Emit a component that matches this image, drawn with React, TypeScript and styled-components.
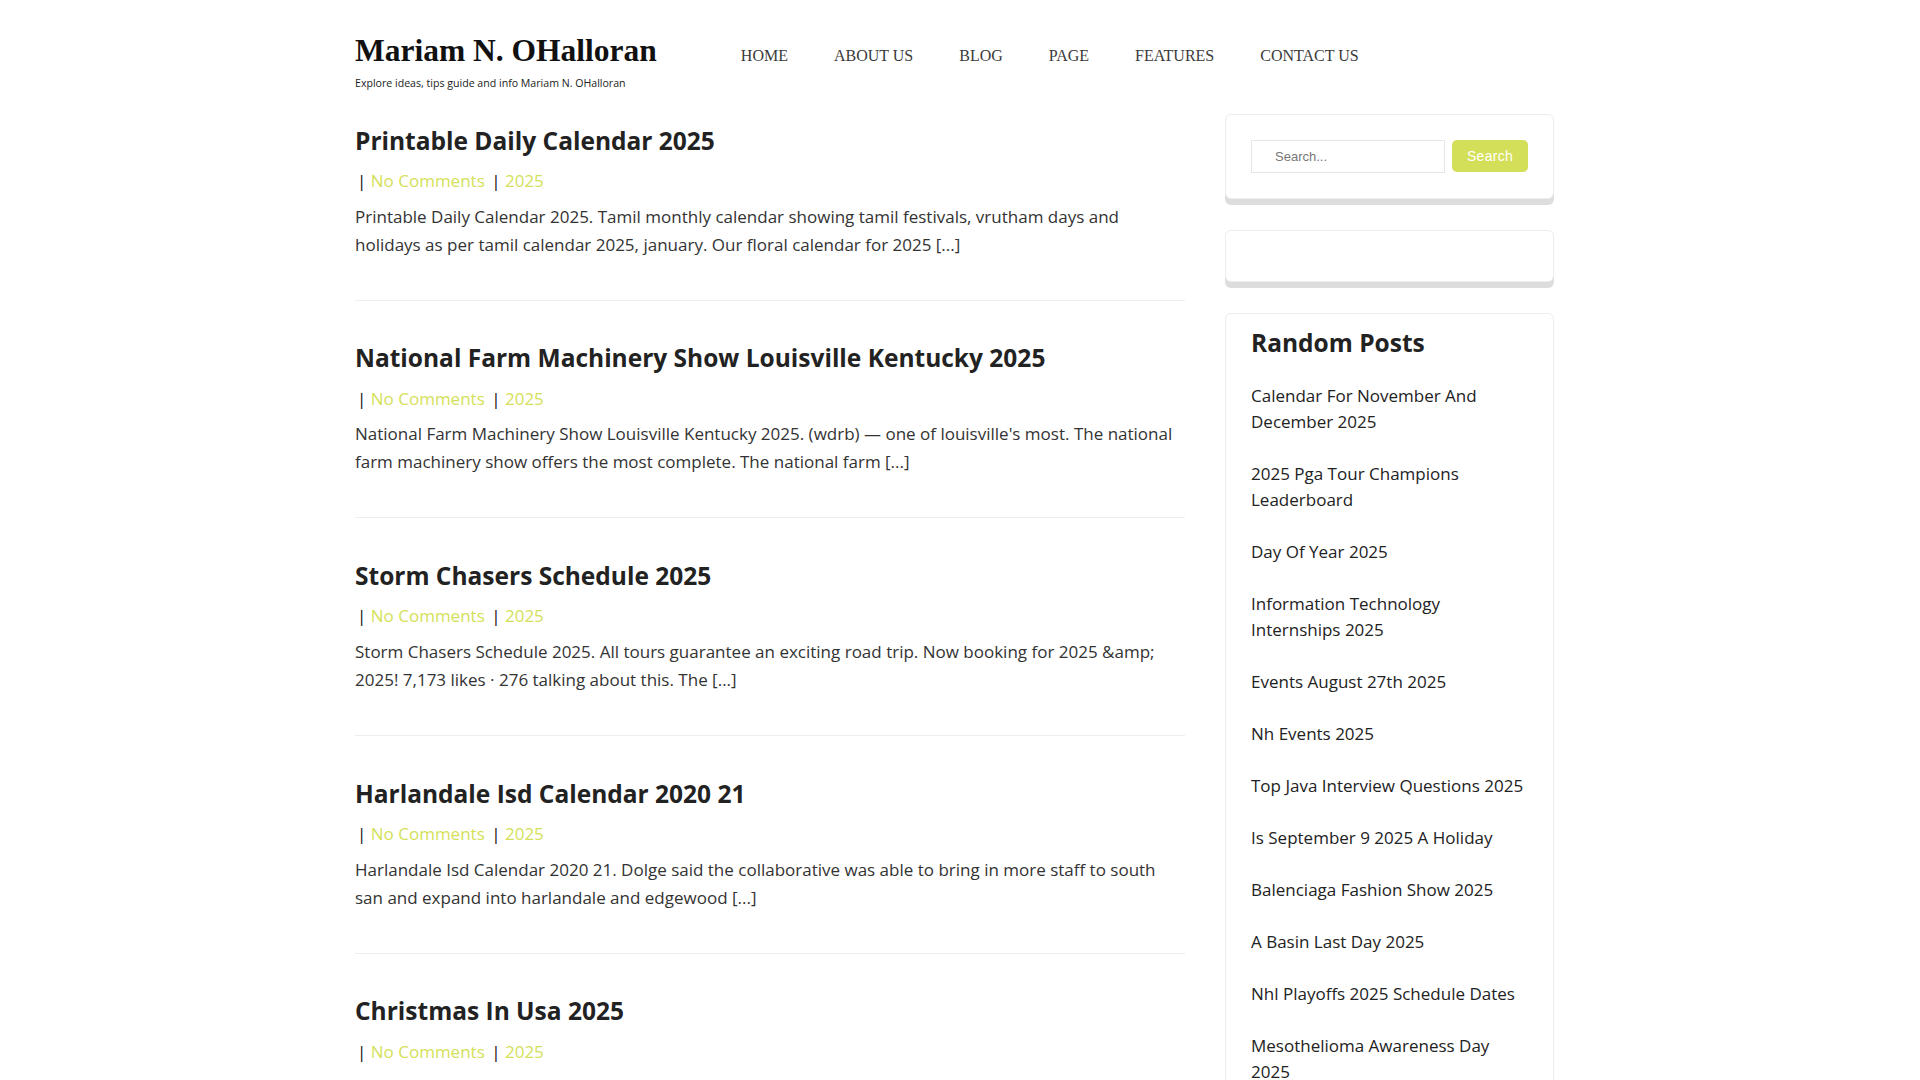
import React from 'react';
import styled, { createGlobalStyle } from 'styled-components';

const GlobalStyle = createGlobalStyle`
  * { box-sizing: border-box; }
  html, body { margin: 0; padding: 0; background: #ffffff; }
  body {
    font-family: 'Open Sans', 'Noto Sans', Arial, sans-serif;
    color: #333333;
    -webkit-font-smoothing: antialiased;
  }
  a { text-decoration: none; }
`;

const ACCENT = '#d4df59';

/* 1214px wide, 13px kept free on the right where the reference has its scrollbar */
const Page = styled.div`
  width: 1214px;
  padding: 0 13px 0 2px;
  margin: 0 auto;
`;

const Header = styled.header`
  display: flex;
  align-items: flex-start;
  padding-top: 32px;
`;

const Brand = styled.div`
  display: flex;
  flex-direction: column;
  flex: 0 0 auto;
`;

const SiteTitle = styled.a`
  font-family: 'Liberation Serif', 'Times New Roman', serif;
  font-weight: 700;
  font-size: 31.5px;
  line-height: 37.8px;
  color: #111111;
`;

const Tagline = styled.p`
  margin: 5px 0 0;
  font-size: 10.6px;
  line-height: 16px;
  color: #222222;
`;

const Nav = styled.nav`
  display: flex;
  gap: 46px;
  margin: 12px 0 0 84px;
`;

const NavLink = styled.a`
  font-family: 'Liberation Serif', 'Times New Roman', serif;
  font-size: 16px;
  line-height: 24px;
  color: #3a3a3a;
  text-transform: uppercase;
`;

const Content = styled.div`
  display: grid;
  grid-template-columns: 830px 329px;
  column-gap: 40px;
  align-items: start;
  margin-top: 23px;
`;

const Main = styled.main`
  padding-top: 11px;
`;

const Article = styled.article`
  padding-bottom: 41px;
  border-bottom: 1px solid #ececf2;
  margin-bottom: 41.6px;
`;

const PostTitle = styled.h2`
  margin: 0;
  font-size: 24.5px;
  font-weight: 700;
  line-height: 32px;
  color: #222222;
  a { color: inherit; }
`;

const Meta = styled.div`
  margin-top: 10.5px;
  font-size: 17px;
  line-height: 28px;
  white-space: nowrap;
`;

const Sep = styled.span`
  color: #111111;
  margin-left: 2px;
`;

const MetaLink = styled.a`
  color: ${ACCENT};
`;

const Excerpt = styled.p`
  margin: 7.5px 0 0;
  font-size: 17px;
  line-height: 28px;
  color: #333333;
`;

const Sidebar = styled.aside`
  display: flex;
  flex-direction: column;
`;

const Widget = styled.section`
  background: #ffffff;
  border: 1px solid #ececf2;
  border-radius: 6px;
  box-shadow: 0 6px 0 #dddddd;
  padding: 25px;
  margin-bottom: 31px;
`;

const SearchForm = styled.form`
  display: flex;
  align-items: flex-start;
  gap: 7px;
`;

const SearchInput = styled.input`
  flex: 1;
  min-width: 0;
  height: 33px;
  border: 1px solid #e6e6ea;
  padding: 0 0 0 23px;
  font-family: 'Liberation Sans', Arial, sans-serif;
  font-size: 13px;
  color: #555555;
  outline: none;
  &::placeholder { color: #777777; }
`;

const SearchButton = styled.button`
  width: 76px;
  height: 32px;
  border: none;
  border-radius: 5px;
  background: ${ACCENT};
  color: #ffffff;
  font-family: 'Liberation Sans', Arial, sans-serif;
  font-size: 14px;
  letter-spacing: 0.3px;
  cursor: pointer;
`;

const WidgetTitle = styled.h3`
  margin: -12px 0 0;
  font-size: 24.5px;
  font-weight: 700;
  line-height: 32px;
  color: #222222;
`;

const PostList = styled.ul`
  list-style: none;
  margin: 11px 0 0;
  padding: 0;
`;

const PostItem = styled.li`
  padding: 13px 0;
  font-size: 17px;
  line-height: 26px;
  a { color: #222222; }
`;

const Footer = styled.footer`
  margin-top: 40px;
  padding: 30px 0 40px;
  border-top: 1px solid #ececf2;
  font-size: 14px;
  color: #555555;
`;

const navItems = ['Home', 'About Us', 'Blog', 'Page', 'Features', 'Contact Us'];

const posts: { title: string; excerpt: string }[] = [
  {
    title: 'Printable Daily Calendar 2025',
    excerpt:
      'Printable Daily Calendar 2025. Tamil monthly calendar showing tamil festivals, vrutham days and holidays as per tamil calendar 2025, january. Our floral calendar for 2025 [...]',
  },
  {
    title: 'National Farm Machinery Show Louisville Kentucky 2025',
    excerpt:
      "National Farm Machinery Show Louisville Kentucky 2025. (wdrb) \u2014 one of louisville's most. The national farm machinery show offers the most complete. The national farm [...]",
  },
  {
    title: 'Storm Chasers Schedule 2025',
    excerpt:
      'Storm Chasers Schedule 2025. All tours guarantee an exciting road trip. Now booking for 2025 &amp; 2025! 7,173 likes \u00b7 276 talking about this. The [...]',
  },
  {
    title: 'Harlandale Isd Calendar 2020 21',
    excerpt:
      'Harlandale Isd Calendar 2020 21. Dolge said the collaborative was able to bring in more staff to south san and expand into harlandale and edgewood [...]',
  },
  {
    title: 'Christmas In Usa 2025',
    excerpt:
      'Christmas In Usa 2025. Christmas day falls on thursday, december 25, 2025 in the united states. It is a federal holiday observed across [...]',
  },
  {
    title: 'Calendar For November And December 2025',
    excerpt:
      'Calendar For November And December 2025. Free printable two month calendar with holidays and space for notes, ready to download and [...]',
  },
  {
    title: 'Day Of Year 2025',
    excerpt:
      'Day Of Year 2025. A day of year calendar lists every date with its ordinal number, from day 1 on january 1 to day 365 on [...]',
  },
  {
    title: 'Events August 27th 2025',
    excerpt:
      'Events August 27th 2025. Find concerts, festivals and local happenings scheduled for late august, with dates and venues for [...]',
  },
  {
    title: 'Nh Events 2025',
    excerpt:
      'Nh Events 2025. From fairs to fall foliage festivals, new hampshire hosts events all year round for families and [...]',
  },
  {
    title: 'Balenciaga Fashion Show 2025',
    excerpt:
      'Balenciaga Fashion Show 2025. The house presented its latest collection in paris, continuing its bold take on [...]',
  },
  {
    title: 'A Basin Last Day 2025',
    excerpt:
      'A Basin Last Day 2025. Arapahoe basin traditionally closes its season late in spring, often among the last in [...]',
  },
  {
    title: 'Nhl Playoffs 2025 Schedule Dates',
    excerpt:
      'Nhl Playoffs 2025 Schedule Dates. The stanley cup playoffs begin in april with sixteen teams competing in four rounds [...]',
  },
];

const randomPosts = [
  'Calendar For November And December 2025',
  '2025 Pga Tour Champions Leaderboard',
  'Day Of Year 2025',
  'Information Technology Internships 2025',
  'Events August 27th 2025',
  'Nh Events 2025',
  'Top Java Interview Questions 2025',
  'Is September 9 2025 A Holiday',
  'Balenciaga Fashion Show 2025',
  'A Basin Last Day 2025',
  'Nhl Playoffs 2025 Schedule Dates',
  'Mesothelioma Awareness Day 2025',
  'Printable Daily Calendar 2025',
  'Storm Chasers Schedule 2025',
];

export default function App() {
  return (
    <>
      <GlobalStyle />
      <Page>
        <Header>
          <Brand>
            <SiteTitle href="#">Mariam N. OHalloran</SiteTitle>
            <Tagline>Explore ideas, tips guide and info Mariam N. OHalloran</Tagline>
          </Brand>
          <Nav>
            {navItems.map((n) => (
              <NavLink key={n} href="#">
                {n}
              </NavLink>
            ))}
          </Nav>
        </Header>
        <Content>
          <Main>
            {posts.map((p) => (
              <Article key={p.title}>
                <PostTitle>
                  <a href="#">{p.title}</a>
                </PostTitle>
                <Meta>
                  <Sep>|</Sep> <MetaLink href="#">No Comments</MetaLink> <Sep>|</Sep>{' '}
                  <MetaLink href="#">2025</MetaLink>
                </Meta>
                <Excerpt>{p.excerpt}</Excerpt>
              </Article>
            ))}
          </Main>
          <Sidebar>
            <Widget>
              <SearchForm onSubmit={(e) => e.preventDefault()}>
                <SearchInput type="search" placeholder="Search..." />
                <SearchButton type="submit">Search</SearchButton>
              </SearchForm>
            </Widget>
            <Widget />
            <Widget>
              <WidgetTitle>Random Posts</WidgetTitle>
              <PostList>
                {randomPosts.map((r) => (
                  <PostItem key={r}>
                    <a href="#">{r}</a>
                  </PostItem>
                ))}
              </PostList>
            </Widget>
          </Sidebar>
        </Content>
        <Footer>Copyright © 2025 Mariam N. OHalloran</Footer>
      </Page>
    </>
  );
}
